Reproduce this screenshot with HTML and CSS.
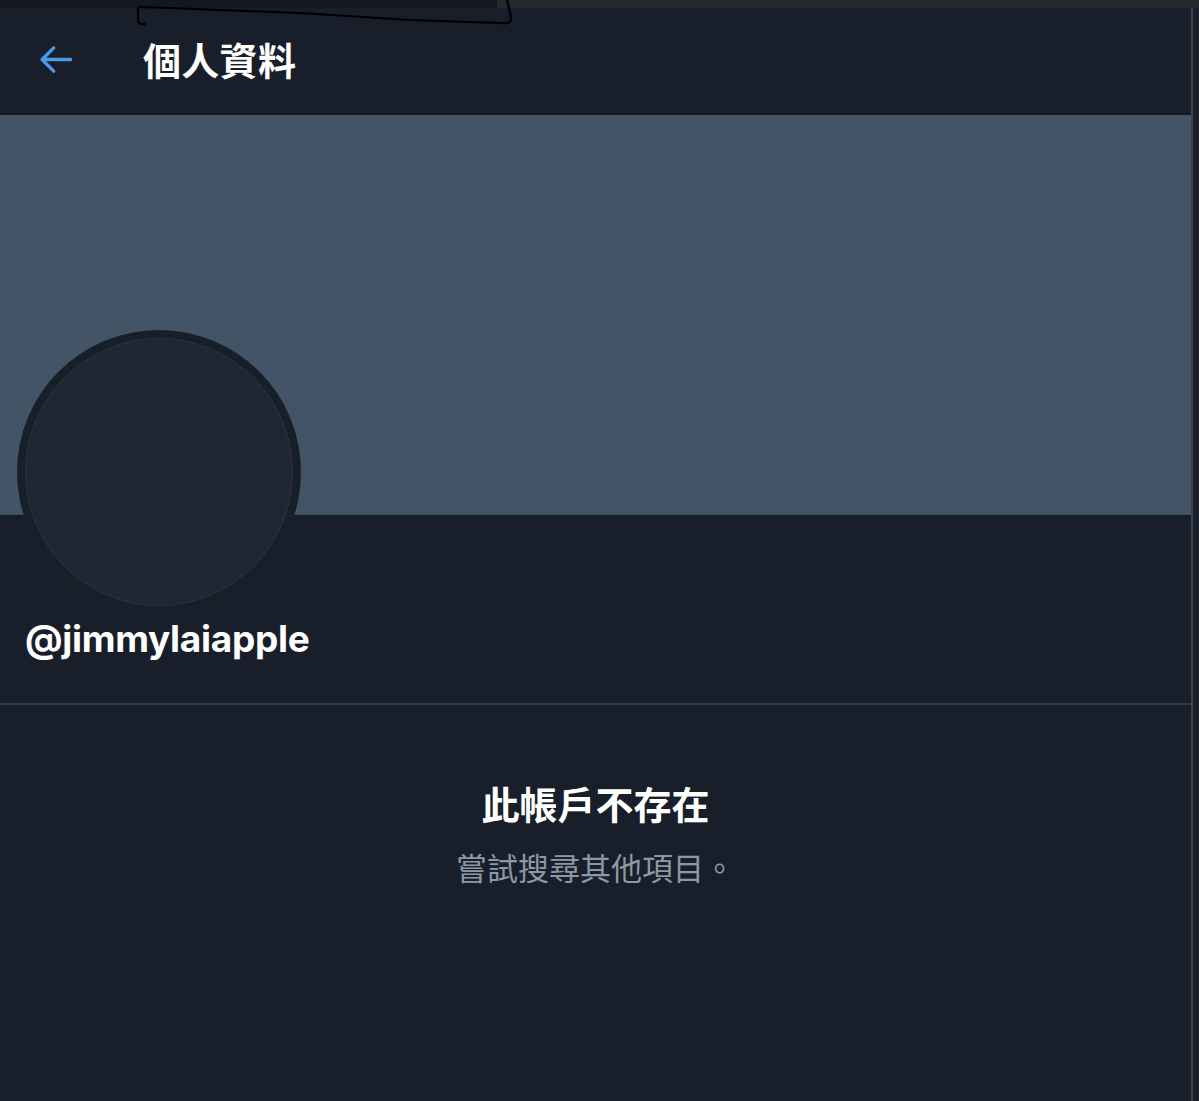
FILE: index.html
```html
<!DOCTYPE html>
<html lang="zh-Hant">
<head>
<meta charset="utf-8">
<title>個人資料</title>
<link rel="stylesheet" href="styles.css">
</head>
<body>
<div class="topstrip">
  <div class="topstrip-left"></div>
  <div class="topstrip-right"></div>
</div>
<svg class="scribble" width="520" height="30" viewBox="0 0 520 30" aria-hidden="true">
  <path d="M145,24 Q138,25 138,20 L138,10 Q138,7 142,7 L300,13 L410,20 L500,23 Q512,25 511,17 L507,0" fill="none" stroke="#000" stroke-width="2.2" stroke-linecap="round" stroke-linejoin="round"/>
</svg>
<div class="main">
  <div class="column">
    <header class="header">
      <div class="back">
        <svg width="43" height="43" viewBox="0 0 24 24" aria-hidden="true">
          <path d="M20.4 12H4.6M11 5.5L4.5 12L11 18.5" fill="none" stroke="#4a9ae8" stroke-width="1.9" stroke-linecap="round" stroke-linejoin="round"/>
        </svg>
      </div>
      <h1 class="header-title">個人資料</h1>
    </header>
    <div class="banner"></div>
    <section class="profile">
      <div class="avatar-ring"><div class="avatar"></div></div>
      <div class="handle">@jimmylaiapple</div>
    </section>
    <section class="empty">
      <div class="empty-title">此帳戶不存在</div>
      <div class="empty-sub">嘗試搜尋其他項目。</div>
    </section>
  </div>
  <div class="vline"></div>
  <div class="side"></div>
</div>
</body>
</html>
```
FILE: styles.css
```css
html, body {
  margin: 0;
  padding: 0;
}
body {
  background: #181f29;
  width: 1199px;
  height: 1101px;
  overflow: hidden;
  font-family: "Noto Sans CJK TC", "Noto Sans", sans-serif;
  color: #ffffff;
}
.topstrip {
  display: flex;
  height: 8px;
}
.topstrip-left {
  width: 497px;
  background: #131820;
}
.topstrip-right {
  flex: 1;
  background: #25292e;
}
.scribble {
  position: absolute;
  left: 0;
  top: 0;
}
.main {
  display: flex;
  height: 1093px;
}
.column {
  width: 1191px;
  background: #181f2a;
  display: flex;
  flex-direction: column;
}
.vline {
  width: 2px;
  background: #3a4450;
}
.side {
  flex: 1;
  background: #1a1f28;
}
.header {
  display: flex;
  align-items: center;
  border-bottom: 2px solid #141a22;
  box-sizing: border-box;
  height: 107px;
}
.back {
  width: 43px;
  height: 43px;
  margin-left: 34px;
  margin-top: -2px;
}
.back svg {
  display: block;
}
.header-title {
  margin: -3px 0 0 66px;
  font-size: 38px;
  font-weight: 700;
  line-height: 48px;
  letter-spacing: 0.3px;
}
.banner {
  height: 399px;
  background: #435467;
  border-bottom: 1px solid #3a4a5a;
}
.profile {
  padding-bottom: 42px;
  border-bottom: 2px solid #333c47;
}
.avatar-ring {
  width: 284px;
  height: 284px;
  margin: -185px 0 0 17px;
  border-radius: 50%;
  background: #172029;
  display: flex;
  align-items: center;
  justify-content: center;
  position: relative;
}
.avatar {
  width: 266px;
  height: 266px;
  border-radius: 50%;
  background: #1e2733;
  border: 1px solid #2a3440;
}
.handle {
  margin: 3px 0 0 25px;
  font-family: "Inter", "Liberation Sans", sans-serif;
  font-size: 37px;
  font-weight: 700;
  line-height: 44px;
  letter-spacing: -0.3px;
}
.empty {
  display: flex;
  flex-direction: column;
  align-items: center;
  padding-top: 75px;
}
.empty-title {
  font-size: 38px;
  font-weight: 700;
  line-height: 46px;
}
.empty-sub {
  margin-top: 23px;
  font-size: 31px;
  line-height: 36px;
  color: #8b98a5;
}
```
